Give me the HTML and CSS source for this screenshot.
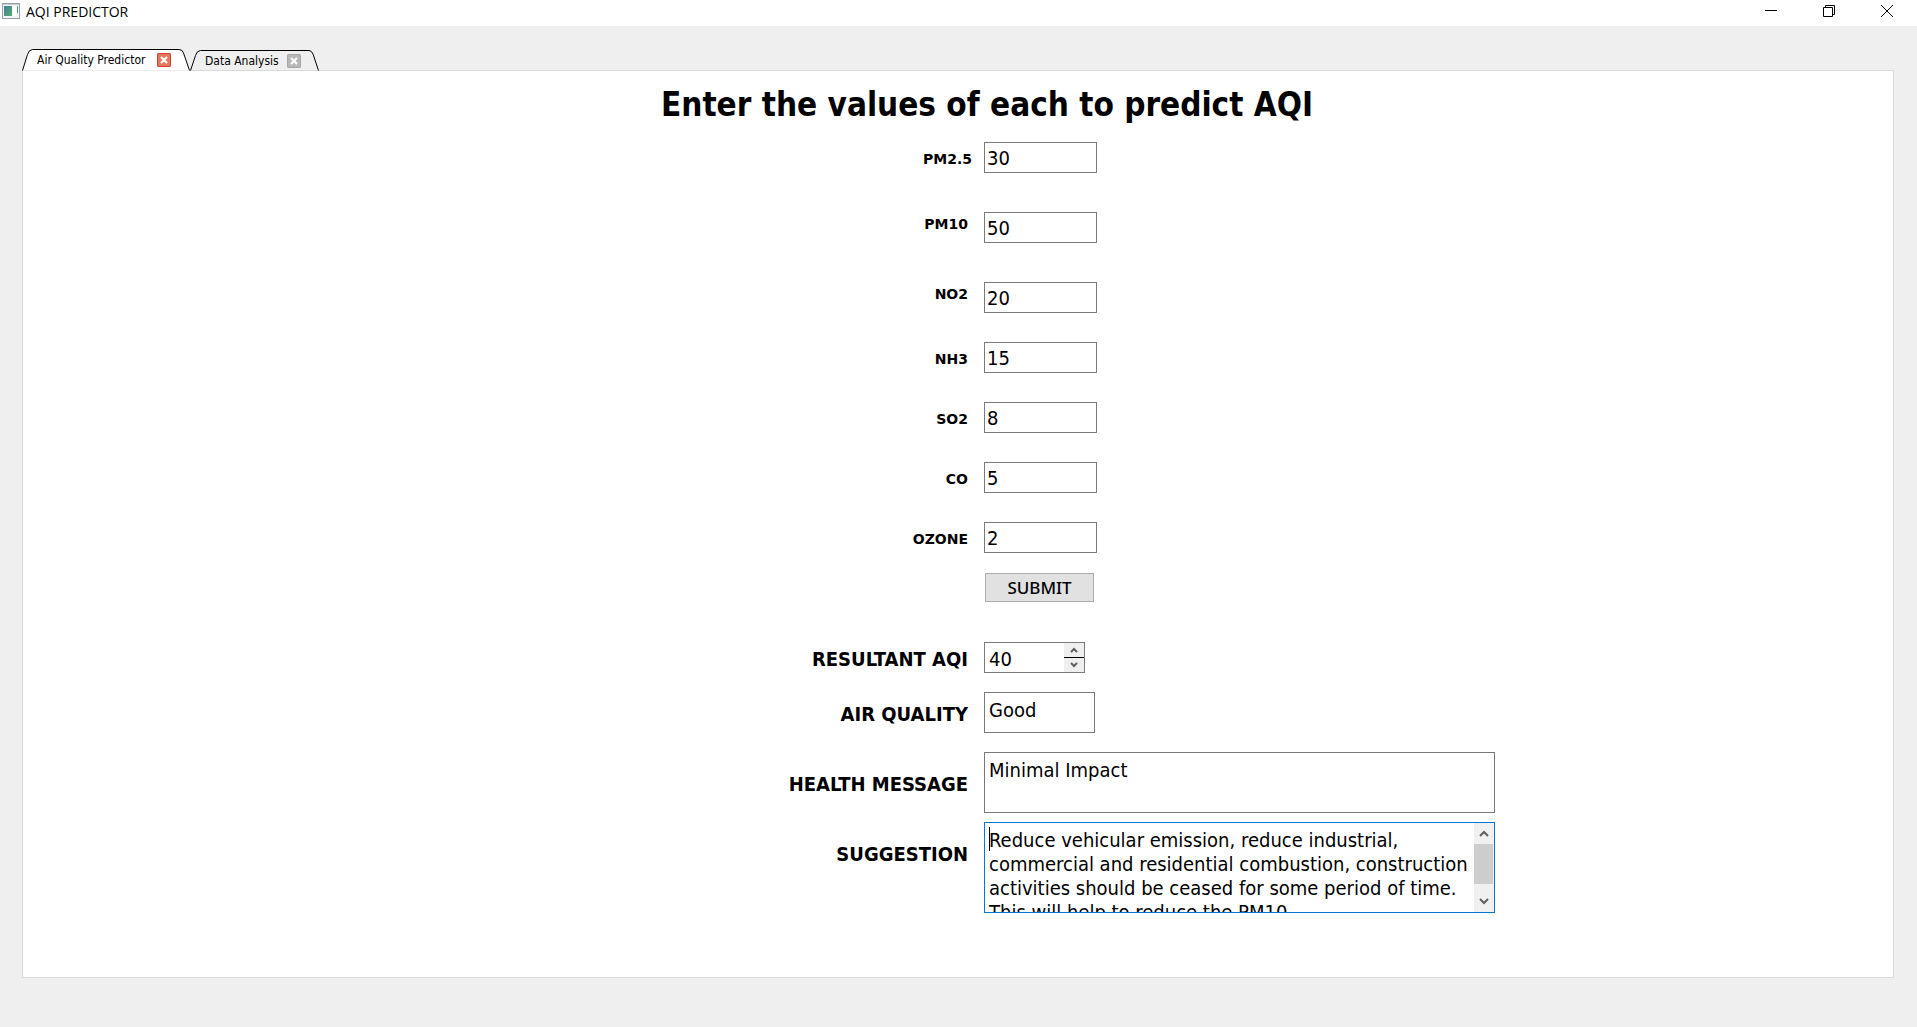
FILE: index.html
```html
<!DOCTYPE html>
<html lang="en">
<head>
<meta charset="utf-8">
<title>AQI PREDICTOR</title>
<link rel="stylesheet" href="styles.css">
</head>
<body>
<header class="titlebar">
  <svg class="app-icon" width="18" height="16" viewBox="0 0 18 16" aria-hidden="true">
    <defs><linearGradient id="g" x1="0" y1="0" x2="1" y2="1"><stop offset="0" stop-color="#3d7f9d"/><stop offset="1" stop-color="#58ab6c"/></linearGradient></defs>
    <rect x=".5" y=".5" width="17" height="15" fill="#f2f4f5" stroke="#98a0a4"/>
    <rect x="1" y="1" width="16" height="1" fill="#c9ced1"/>
    <rect x="2" y="3" width="8" height="10" fill="url(#g)"/>
    <rect x="11" y="3" width="4" height="10" fill="#fff"/>
    <path d="M15 3h1v7h-1z" fill="#4e9a8a"/>
  </svg>
  <h1 class="app-name">AQI PREDICTOR</h1>
  <div class="window-controls">
    <button type="button" class="window-button" aria-label="Minimize"><svg width="12" height="12" viewBox="0 0 12 12"><path d="M0 5.500h12"/></svg></button>
    <button type="button" class="window-button" aria-label="Restore"><svg width="12" height="12" viewBox="0 0 12 12"><path d="M.5 2.500h9v9h-9zM2.500 2.500v-2h9v9h-2"/></svg></button>
    <button type="button" class="window-button" aria-label="Close"><svg width="12" height="12" viewBox="0 0 12 12"><path d="M0 0l12 12M12 0L0 12"/></svg></button>
  </div>
</header>

<main class="workspace">
  <nav class="tabs">
    <div class="tab tab-active">
      <svg class="tab-shape" width="168" height="22" viewBox="0 0 168 22" aria-hidden="true"><path d="M.5 21.500L5.500 5.500Q7 .5 10.500 .5H157Q160.500 .5 161.500 4L167.500 21.500"/></svg>
      <button type="button" class="tab-name">Air Quality Predictor</button>
      <button type="button" class="tab-close" aria-label="Close Air Quality Predictor"><svg width="14" height="14" viewBox="0 0 14 14"><path d="M4 4l6 6M10 4l-6 6"/></svg></button>
    </div>
    <div class="tab tab-idle">
      <svg class="tab-shape" width="129" height="21" viewBox="0 0 129 21" aria-hidden="true"><path d="M.5 20.500L5.500 5.500Q7 .5 10.500 .5H119Q121.500 .5 123 4L128.500 20.500"/></svg>
      <button type="button" class="tab-name">Data Analysis</button>
      <button type="button" class="tab-close" aria-label="Close Data Analysis"><svg width="14" height="14" viewBox="0 0 14 14"><path d="M4 4l6 6M10 4l-6 6"/></svg></button>
    </div>
  </nav>

  <form class="panel">
    <h2 class="heading">Enter the values of each to predict AQI</h2>

    <div class="row row-tall"><label class="name name-wide" for="pm25">PM2.5</label><input class="value" id="pm25" type="text" value="30"></div>
    <div class="row row-tall"><label class="name name-high" for="pm10">PM10</label><input class="value" id="pm10" type="text" value="50"></div>
    <div class="row"><label class="name name-high" for="no2">NO2</label><input class="value" id="no2" type="text" value="20"></div>
    <div class="row"><label class="name" for="nh3">NH3</label><input class="value" id="nh3" type="text" value="15"></div>
    <div class="row"><label class="name" for="so2">SO2</label><input class="value" id="so2" type="text" value="8"></div>
    <div class="row"><label class="name" for="co">CO</label><input class="value" id="co" type="text" value="5"></div>
    <div class="row row-last"><label class="name" for="ozone">OZONE</label><input class="value" id="ozone" type="text" value="2"></div>

    <div class="row row-submit"><button type="button" class="submit">SUBMIT</button></div>

    <div class="row row-result">
      <label class="name name-large" for="aqi">RESULTANT AQI</label>
      <div class="spin">
        <input class="spin-value" id="aqi" type="number" value="40">
        <div class="spin-buttons">
          <button type="button" class="spin-button" aria-label="Increase"><svg width="8" height="6" viewBox="0 0 8 6"><path d="M1 5l3-3 3 3"/></svg></button>
          <button type="button" class="spin-button" aria-label="Decrease"><svg width="8" height="6" viewBox="0 0 8 6"><path d="M1 1l3 3 3-3"/></svg></button>
        </div>
      </div>
    </div>
    <div class="row row-result">
      <label class="name name-large" for="quality">AIR QUALITY</label>
      <textarea class="message message-short" id="quality">Good</textarea>
    </div>
    <div class="row row-health">
      <label class="name name-large" for="health">HEALTH MESSAGE</label>
      <textarea class="message message-long" id="health">Minimal Impact</textarea>
    </div>
    <div class="row">
      <label class="name name-large name-top" for="suggestion">SUGGESTION</label>
      <div class="scroll-box">
        <textarea class="scroll-text" id="suggestion">Reduce vehicular emission, reduce industrial,
commercial and residential combustion, construction
activities should be ceased for some period of time.
This will help to reduce the PM10</textarea>
        <div class="scrollbar">
          <button type="button" class="scroll-button" aria-label="Scroll up"><svg width="10" height="7" viewBox="0 0 10 7"><path d="M1 6l4-4 4 4"/></svg></button>
          <div class="scroll-thumb"></div>
          <button type="button" class="scroll-button" aria-label="Scroll down"><svg width="10" height="7" viewBox="0 0 10 7"><path d="M1 1l4 4 4-4"/></svg></button>
        </div>
        <span class="caret"></span>
      </div>
    </div>
  </form>
</main>
</body>
</html>
```

FILE: styles.css
```css
* { box-sizing: border-box; }

body {
  display: flex;
  flex-direction: column;
  min-height: 100vh;
  margin: 0;
  background: #efefef;
  color: #000;
  font-family: "DejaVu Sans Condensed", "Noto Sans", sans-serif;
}

button, input, textarea {
  margin: 0;
  padding: 0;
  border: 0;
  border-radius: 0;
  background: transparent;
  color: inherit;
  font: inherit;
}

svg { display: block; fill: none; stroke: #000; }

/* Title bar */
.titlebar {
  display: flex;
  align-items: flex-start;
  height: 26px;
  padding: 0 1px 0 2px;
  background: #fff;
}
.app-icon { margin-top: 3px; stroke: none; }
.app-name {
  margin: 0 auto 0 6px;
  font: 14px/24px "Open Sans", sans-serif;
}
.window-controls { display: flex; }
.window-button {
  display: grid;
  place-items: center;
  width: 58px;
  height: 22px;
}

/* Tabs */
.workspace {
  flex: 1;
  display: flex;
  flex-direction: column;
  padding: 23px 23px 49px 22px;
}
.tabs {
  position: relative;
  z-index: 1;
  display: flex;
  align-items: flex-end;
  height: 22px;
  margin-bottom: -1px;
}
.tab {
  position: relative;
  display: flex;
  align-items: center;
  justify-content: space-between;
  font-size: 12px;
}
.tab-active { width: 168px; height: 22px; padding: 0 19px 0 15px; }
.tab-idle { width: 129px; height: 21px; padding: 0 18px 0 15px; }
.tab-shape { position: absolute; inset: 0; }
.tab-active .tab-shape { fill: #fff; }
.tab-name, .tab-close { position: relative; white-space: nowrap; }
.tab-close {
  width: 14px;
  height: 14px;
  border-radius: 2px;
  background: #b8b8b8;
  box-shadow: inset 0 0 0 1px #a6a6a6;
}
.tab-close svg { stroke: #fff; stroke-width: 2; }
.tab-active .tab-close { background: #e07a5f; box-shadow: inset 0 0 0 1px #d9402c; }

/* Form */
.panel {
  flex: 1;
  padding-top: 10px;
  border: 1px solid #d9d9d9;
  background: #fff;
}
.heading {
  margin: 0 0 13px;
  padding-left: 58px;
  font-size: 33px;
  line-height: 48px;
  text-align: center;
}
.row {
  display: grid;
  grid-template-columns: calc(50% + 10px) 511px;
  column-gap: 16px;
  align-items: center;
  justify-items: start;
  margin-bottom: 29px;
}
.row-tall { margin-bottom: 39px; }
.row-last { margin-bottom: 20px; }
.row-submit { margin-bottom: 40px; }
.row-result { margin-bottom: 19px; }
.row-health { margin-bottom: 9px; }

.name {
  justify-self: end;
  padding-top: 2px;
  font: bold 14px/20px "DejaVu Sans", sans-serif;
}
.name-wide { margin-right: -4px; }
.name-high { padding: 0 0 7px; }
.name-large { font: bold 20px/24px "DejaVu Sans Condensed", sans-serif; }
.name-top { align-self: start; padding-top: 20px; }

.value {
  width: 113px;
  height: 31px;
  padding: 0 2px;
  border: 1px solid #7a7a7a;
  font-size: 20px;
}
.submit {
  grid-column: 2;
  width: 109px;
  height: 29px;
  margin-left: 1px;
  border: 1px solid #adadad;
  background: #e1e1e1;
  font: 500 17px/24px "Noto Sans", sans-serif;
}

.spin {
  display: flex;
  width: 101px;
  height: 31px;
  border: 1px solid #7a7a7a;
}
.spin-value {
  flex: 1;
  min-width: 0;
  padding: 3px 0 0 4px;
  font-size: 20px;
  appearance: textfield;
}
.spin-value::-webkit-inner-spin-button { display: none; }
.spin-buttons { display: flex; flex-direction: column; width: 20px; }
.spin-button {
  flex: 1;
  display: grid;
  place-items: center;
  background: #efefef;
}
.spin-button + .spin-button { border-top: 1px solid #000; }
.spin-button svg { stroke: #606060; stroke-width: 2; }

.message, .scroll-text {
  display: block;
  padding: 5px 4px 0;
  font-size: 20px;
  line-height: 24px;
  resize: none;
  overflow: hidden;
  outline: 0;
}
.message { border: 1px solid #7a7a7a; }
.message-short { width: 111px; height: 41px; }
.message-long { width: 511px; height: 61px; }

.scroll-box {
  position: relative;
  display: flex;
  width: 511px;
  height: 91px;
  border: 1px solid #0078d7;
}
.scroll-text { flex: 1; min-width: 0; white-space: pre; }
.caret {
  position: absolute;
  top: 4px;
  left: 4px;
  width: 1px;
  height: 24px;
  background: #000;
}
.scrollbar {
  display: flex;
  flex-direction: column;
  width: 20px;
  background: #f0f0f0;
}
.scroll-button { display: grid; place-items: center; height: 21px; }
.scroll-button svg { stroke: #606060; stroke-width: 2; }
.scroll-thumb { width: 19px; height: 40px; background: #cdcdcd; }
.scroll-thumb + .scroll-button { margin-top: auto; }
```
